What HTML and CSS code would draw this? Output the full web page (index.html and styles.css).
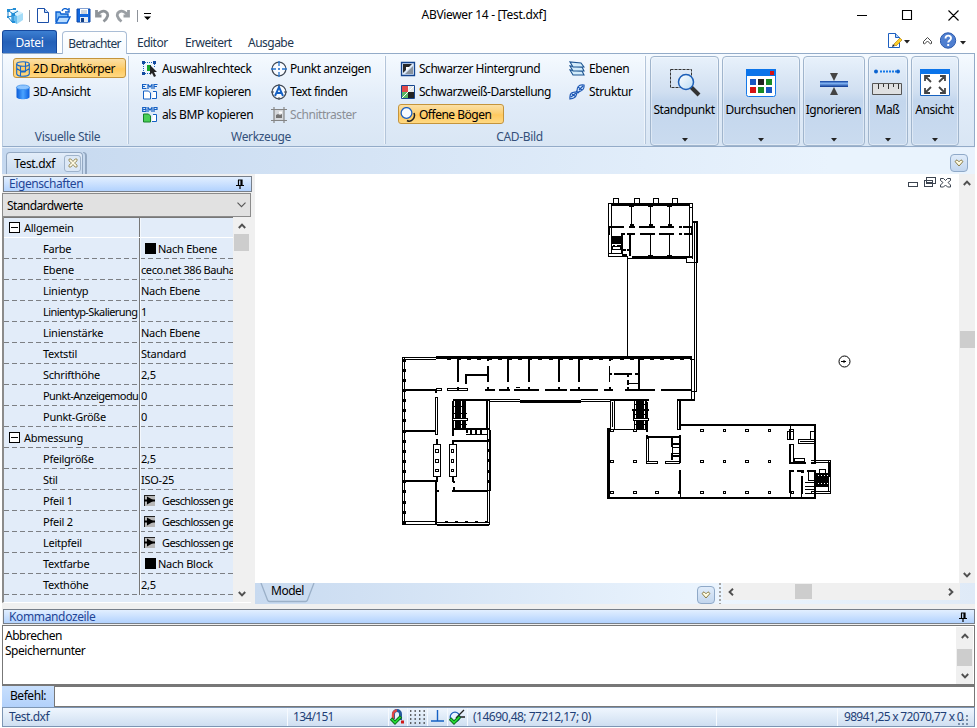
FILE: index.html
```html
<!DOCTYPE html>
<html lang="de">
<head>
<meta charset="utf-8">
<title>ABViewer 14 - [Test.dxf]</title>
<link rel="stylesheet" href="styles.css">
</head>
<body>
<svg class="defs" width="0" height="0">
  <defs>
    <linearGradient id="blue" x1="0" y1="0" x2="1" y2="0"><stop offset="0" stop-color="#0a5bd8"/><stop offset=".5" stop-color="#4aa3ff"/><stop offset="1" stop-color="#0b5fe0"/></linearGradient>
    <linearGradient id="lens" x1="0" y1="0" x2="1" y2="1"><stop offset="0" stop-color="#fff"/><stop offset="1" stop-color="#b9dcf5"/></linearGradient>
    <linearGradient id="bar" x1="0" y1="0" x2="0" y2="1"><stop offset="0" stop-color="#0c3c9c"/><stop offset=".4" stop-color="#7fb2f2"/><stop offset="1" stop-color="#0a3590"/></linearGradient>
    <symbol id="i-dd" viewBox="0 0 6 4"><path d="M0 0h6L3 3.5z" fill="#222"/></symbol>
    <symbol id="i-chev" viewBox="0 0 10 8"><path d="M1 2.5L3 .8 5 2.8 7 .8 9 2.5 5 7z" fill="#fffbe0" stroke="#8a7d4a"/></symbol>
    <symbol id="i-pin" viewBox="0 0 8 10"><path d="M2 1h4v5M2.500 1v5M5 1v5M0 6.500h8M4 7v3" fill="none" stroke="#000" stroke-width="1.200"/></symbol>
    <symbol id="i-up" viewBox="0 0 8 6"><path d="M.8 5L4 1.600 7.200 5" fill="none" stroke="#505050" stroke-width="1.900"/></symbol>
    <symbol id="i-down" viewBox="0 0 8 6"><path d="M.8 1L4 4.400 7.200 1" fill="none" stroke="#505050" stroke-width="1.900"/></symbol>
    <symbol id="i-arrow" viewBox="0 0 11 11"><path d="M0 0h11v11H0z" fill="#b8b8b8"/><path d="M0 .5h11M.5 0v11" stroke="#222"/><path d="M0 5.500h11" stroke="#000" stroke-width="2"/><path d="M3 1.500l7 4-7 4z"/></symbol>
  </defs>
</svg>

<header class="titlebar">
  <div class="quick">
    <svg class="q-logo" width="18" height="18" viewBox="0 0 18 18"><path d="M5 5l6-2 6 3-6 3z" fill="#d5f0fd"/><path d="M5 5l6 4v8l-6-3z" fill="#67bdf0"/><path d="M11 9l6-3v7l-6 4z" fill="#a4dcf8"/><path d="M3 3l5-1M2 4v6l4 5M3 4l4 3v8M7 7l5-3M2 10l4-1" fill="none" stroke="#1d7fc4"/><path d="M1 2h3v3H1zM7 1h3v2H7zM6 6h3v3H6zM1 9h2v2H1zM6 14h3v2H6z" fill="#238fd8"/></svg>
    <i class="q-sep"></i>
    <svg class="q-new" width="12" height="15" viewBox="0 0 12 15"><path d="M.5.5h7l4 4v10H.5z" fill="#fff" stroke="#1b4fa8"/><path d="M7.500.5v4h4" fill="#bcd7f7" stroke="#1b4fa8"/></svg>
    <svg class="q-open" width="16" height="16" viewBox="0 0 16 16"><path d="M1 14V4h4l1 2h7v3" fill="#7fbdf8" stroke="#0b5fd0" stroke-width="1.400"/><path d="M1 15l3-6h11l-3 6z" fill="#b9dcff" stroke="#0b5fd0" stroke-width="1.400"/><path d="M7 3c1-3 4-3 6-1M14 0v4h-4" fill="none" stroke="#0b5fd0" stroke-width="1.400"/></svg>
    <svg class="q-save" width="15" height="15" viewBox="0 0 15 15"><path d="M1 1h13v13H1z" fill="#1269e0" stroke="#0b46a8"/><path d="M4 1h8v5H4z" fill="#fff"/><path d="M5 3h6M5 5h6" stroke="#9ab"/><path d="M4 9h8v5H4z" fill="#e8eef5"/><path d="M5 10h3v4H5z" fill="#123f86"/></svg>
    <svg class="q-undo" width="15" height="14" viewBox="0 0 15 14"><path d="M1.500 1v6h5M2 6.500C4 3 8 1 11 3s2 6-2.500 9.500" fill="none" stroke="#8f9499" stroke-width="2.800"/></svg>
    <svg class="q-redo" width="15" height="14" viewBox="0 0 15 14"><path d="M13.500 1v6h-5M13 6.500C11 3 7 1 4 3s-2 6 2.500 9.500" fill="none" stroke="#9a9fa4" stroke-width="2.800"/></svg>
    <i class="q-sep"></i>
    <svg class="q-more" width="7" height="8" viewBox="0 0 7 8"><path d="M0 1h7v1H0zM0 4.500h7L3.500 8z" fill="#000"/></svg>
  </div>
  <h1>ABViewer 14 - [Test.dxf]</h1>
  <svg class="winbtns" width="104" height="12" viewBox="0 0 104 12"><path d="M0 6.500h10M45.500 1.500h9v9h-9zM91.500 1.500l10 10M101.500 1.500l-10 10" fill="none" stroke="#000" stroke-width="1.100"/></svg>
</header>

<nav class="tabs">
  <span class="tab file">Datei</span>
  <span class="tab active">Betrachter</span>
  <span class="tab t3">Editor</span>
  <span class="tab t4">Erweitert</span>
  <span class="tab t5">Ausgabe</span>
  <div class="help">
    <svg width="24" height="16" viewBox="0 0 24 16"><path d="M1.500.5h7l4 4v10h-11z" fill="#fff" stroke="#1d5fc0"/><path d="M8.500.5v4h4" fill="#a9cdf6" stroke="#1d5fc0"/><path d="M5 14l1-3 2 2z" fill="#222"/><path d="M7 11l6-6 2 2-6 6z" fill="#ffd02a" stroke="#b8860b" stroke-width=".7"/><path d="M17 7h6l-3 3.500z" fill="#222"/></svg>
    <svg class="h-up" width="9" height="8" viewBox="0 0 9 8"><path d="M.5 4.500l4-4 4 4v2l-1 .5-3-3-3 3-1-.5z" fill="#fff" stroke="#444"/></svg>
    <svg width="27" height="17" viewBox="0 0 27 17"><circle cx="8" cy="8.500" r="7.700" fill="#4f7fd0" stroke="#2d5bae"/><path d="M5.500 6.500c0-4 5.500-3.500 5.500-.3C11 8.500 8.200 8.300 8.200 10.500M8.200 12v2" fill="none" stroke="#fff" stroke-width="1.900"/><path d="M20 9h6l-3 3.500z" fill="#222"/></svg>
  </div>
</nav>

<section class="ribbon">
  <div class="group g1">
    <div class="cols"><div class="col">
      <span class="cmd on w113"><svg width="16" height="16" viewBox="0 0 16 16"><g fill="none" stroke="#1769c8" stroke-width="1.100"><ellipse cx="8" cy="3" rx="6.300" ry="2.300"/><path d="M1.700 3v10c1 3 11.600 3 12.600 0V3M5.500 5v10M10.500 1v10M1.700 7.500l4 2.500h4.800l4-2.500M5.500 15v-4h5"/></g></svg>2D Drahtkörper</span>
      <span class="cmd"><svg width="16" height="16" viewBox="0 0 16 16"><path d="M1.500 3v10c0 3 13 3 13 0V3z" fill="url(#blue)"/><ellipse cx="8" cy="3.300" rx="6.500" ry="2.300" fill="#8fc6ff" stroke="#3a8eea" stroke-width=".7"/></svg>3D-Ansicht</span>
    </div></div>
    <div class="label">Visuelle Stile</div>
  </div>
  <div class="group g2">
    <div class="cols"><div class="col c1">
      <span class="cmd"><svg width="16" height="16" viewBox="0 0 16 16"><path d="M3 1.500h9M1.500 3v9M12.500 3v4M3 12.500h5" stroke="#1c61bd" stroke-dasharray="1 1"/><path d="M0 0h3v3H0zM11 0h3v3h-3zM0 11h3v3H0z" fill="#124a9f"/><path d="M5 4h4v6H5z" fill="#16a32b"/><path d="M8 4v10l2-2 2 4 2-1-2-4h3z" fill="#222"/></svg>Auswahlrechteck</span>
      <span class="cmd"><svg width="16" height="16" viewBox="0 0 16 16"><path d="M4.500.5h-4v4h4M.5 2.500H3M6 5V.5L8 3l2-2.500V5M15.500.5H12V5M12 2.500h3" fill="none" stroke="#1460c4" stroke-width="1.200"/><path d="M1.500 7h5l2 2v6h-7z" fill="#fff" stroke="#1460c4"/><path d="M11 7.500h3.500v7H10" fill="#fff" stroke="#1460c4"/></svg>als EMF kopieren</span>
      <span class="cmd"><svg width="16" height="16" viewBox="0 0 16 16"><path d="M.7 5V.5H4L3.500 2.500H1h3L4 4.500H1M6 5V.5L8 3l2-2.500V5M12 5V.5h3v2h-3" fill="none" stroke="#1460c4" stroke-width="1.200"/><path d="M1.500 7h5l2 2v6h-7z" fill="#49cf55" stroke="#16812a"/><path d="M11 7.500h3.500v7H10" fill="#fff" stroke="#1460c4"/></svg>als BMP kopieren</span>
    </div><div class="col">
      <span class="cmd"><svg width="16" height="16" viewBox="0 0 16 16"><circle cx="8" cy="8" r="6.900" fill="#f8fbff" stroke="#444c58" stroke-width="1.300"/><path d="M8 0v5M8 11v5M0 8h5M11 8h5" stroke="#2674cf" stroke-width="1.300"/><circle cx="8" cy="8" r="1" fill="#1460c4"/></svg>Punkt anzeigen</span>
      <span class="cmd"><svg width="16" height="16" viewBox="0 0 16 16"><circle cx="8" cy="8" r="6.900" fill="#f8fbff" stroke="#444c58" stroke-width="1.300"/><path d="M8 0v3M8 13v3M0 8h3M13 8h3" stroke="#444c58"/><path d="M4 12L8 3l4 9M5.500 9h5" fill="none" stroke="#1460c4" stroke-width="1.900"/></svg>Text finden</span>
      <span class="cmd off"><svg width="16" height="16" viewBox="0 0 16 16"><path d="M3 3h10v10H3z" fill="#d5d8dc"/><path d="M3 0v16M13 0v16M0 2.500h16M0 13.500h16" fill="none" stroke="#858585" stroke-width="1.200"/><path d="M5 11V8l2-1 2 1 2-1v4z" fill="#737373"/><path d="M8 4.500h3v2H8z" fill="#fff"/></svg>Schnittraster</span>
    </div></div>
    <div class="label">Werkzeuge</div>
  </div>
  <div class="group g3">
    <div class="cols"><div class="col c1">
      <span class="cmd"><svg width="16" height="16" viewBox="0 0 16 16"><path d="M1.500 1.500h13v13h-13z" fill="#dbe9fa" stroke="#15458f" stroke-width="1.300"/><path d="M3 3h9L3 12z" fill="#282828"/><path d="M13 5v8H5z" fill="#89939e"/><path d="M6 6h4l-4 4z" fill="#fff"/></svg>Schwarzer Hintergrund</span>
      <span class="cmd"><svg width="16" height="16" viewBox="0 0 16 16"><path d="M1.500 1.500h13v13h-13z" fill="#fff" stroke="#15458f"/><path d="M2 2h6v6H2z" fill="#e04a4a"/><path d="M8 8h6v6H8z" fill="#222"/><path d="M9 2h5v6H8z" fill="#e4e7e9"/><path d="M2 8h6v6H2z" fill="#5bb865"/><path d="M2 14L14 2" stroke="#fff"/></svg>Schwarzweiß-Darstellung</span>
      <span class="cmd on w106"><svg width="16" height="16" viewBox="0 0 16 16"><circle cx="6.500" cy="6" r="5.400" fill="#f7fbff" stroke="#1b5fc0" stroke-width="1.300"/><path d="M14 6c2 5-3 10-7 7.500" fill="none" stroke="#222" stroke-width="1.500"/></svg>Offene Bögen</span>
    </div><div class="col">
      <span class="cmd"><svg width="16" height="16" viewBox="0 0 16 16"><g fill="#d3ecfb" stroke="#1b5390" stroke-width="1.100"><path d="M1 9l3 5h11l-2-4z"/><path d="M1 5l3 5h11l-2-4z"/><path d="M1 1l3 5h11l-3-4z"/></g></svg>Ebenen</span>
      <span class="cmd"><svg width="16" height="16" viewBox="0 0 16 16"><path d="M1 15C0 5 8 10 8 7S9 0 15 1c1 7-6 6-7 8s0 5-7 6zM3 10l4 3M2 13l5-4M9 3l4 3M10 6l4-4M7 7l3 2" fill="#dceeff" stroke="#1c56b3" stroke-width="1.200"/></svg>Struktur</span>
    </div></div>
    <div class="label">CAD-Bild</div>
  </div>
  <div class="bigs">
    <div class="big b1"><svg width="32" height="32" viewBox="0 0 32 32"><path d="M1.500 3.500h21v18h-21z" fill="none" stroke="#333" stroke-dasharray="3 1"/><path d="M21 20l9 9" stroke="#333" stroke-width="4"/><circle cx="17" cy="16" r="7.500" fill="url(#lens)" stroke="#1c5fb8" stroke-width="1.500"/></svg><span>Standpunkt</span><svg class="dd" width="6" height="4"><use href="#i-dd"/></svg></div>
    <div class="big b2"><svg width="32" height="32" viewBox="0 0 32 32"><rect x="1.500" y="3.500" width="29" height="27" rx="2" fill="#fff" stroke="#1478e8"/><path d="M1 3h30v7H1z" fill="#0b74ea"/><path d="M25 5h4v4h-4zM5 21h6v6H5z" fill="#d51212"/><path d="M5 13h6v6H5zM21 21h6v6h-6z" fill="#1757c2"/><path d="M13 13h6v6h-6z" fill="#222"/><path d="M21 13h6v6h-6zM13 21h6v6h-6z" fill="#168a24"/></svg><span>Durchsuchen</span><svg class="dd" width="6" height="4"><use href="#i-dd"/></svg></div>
    <div class="big b3"><svg width="32" height="32" viewBox="0 0 32 32"><path d="M12 7h8l-4 8zM16 21l4 8h-8z" fill="#444"/><path d="M2 15h28v6H2z" fill="url(#bar)"/></svg><span>Ignorieren</span><svg class="dd" width="6" height="4"><use href="#i-dd"/></svg></div>
    <div class="big b4"><svg width="32" height="32" viewBox="0 0 32 32"><path d="M8 5.500h16" stroke="#1478e8" stroke-width="2" stroke-dasharray="2 1"/><circle cx="4" cy="5.500" r="2" fill="#0b63d0"/><circle cx="26" cy="5.500" r="2" fill="#0b63d0"/><path d="M.5 17.500h29v11H.5z" fill="#dfe0e1" stroke="#555"/><path d="M6.500 18v5M11.500 18v3M16.500 18v5M21.500 18v3M26.500 18v5" stroke="#333"/></svg><span>Maß</span><svg class="dd" width="6" height="4"><use href="#i-dd"/></svg></div>
    <div class="big b5"><svg width="32" height="32" viewBox="0 0 32 32"><path d="M1.500 3.500h29v26h-29z" fill="#fff" stroke="#1661bf"/><path d="M1 3h30v5H1z" fill="#0b74ea"/><g fill="none" stroke="#444" stroke-width="1.800"><path d="M12 16l-5-5M6 15v-5h5M20 16l5-5M21 10h5v5M12 21l-5 5M6 22v5h5M20 21l5 5M21 27h5v-5"/></g></svg><span>Ansicht</span><svg class="dd" width="6" height="4"><use href="#i-dd"/></svg></div>
  </div>
</section>

<div class="docbar">
  <div class="doctab"><span>Test.dxf</span><i class="close"><svg width="10" height="10" viewBox="0 0 10 10"><path d="M1 1h2l2 2.500L7 1h2v2L6.500 5 9 7v2H7L5 6.500 3 9H1V7l2.500-2L1 3z" fill="#fffbe6" stroke="#8a7d4a" stroke-width=".8"/></svg></i></div><i class="tabend"></i>
  <i class="chevbtn"><svg width="10" height="8"><use href="#i-chev"/></svg></i>
</div>

<main class="work">
  <aside class="panel">
    <div class="cap"><span>Eigenschaften</span><svg width="8" height="10"><use href="#i-pin"/></svg></div>
    <div class="combo"><span>Standardwerte</span><svg width="9" height="6" viewBox="0 0 9 6"><path d="M.5.7l4 4 4-4" fill="none" stroke="#555" stroke-width="1.100"/></svg></div>
    <div class="gridwrap">
      <div class="props">
        <div class="row head first"><b><i class="minus"></i>Allgemein</b><span></span></div>
        <div class="row"><b>Farbe</b><span><i class="sw"></i>Nach Ebene</span></div>
        <div class="row"><b>Ebene</b><span class="tight">ceco.net 386 Bauha</span></div>
        <div class="row"><b>Linientyp</b><span>Nach Ebene</span></div>
        <div class="row"><b class="tight">Linientyp-Skalierung</b><span>1</span></div>
        <div class="row"><b>Linienstärke</b><span>Nach Ebene</span></div>
        <div class="row"><b>Textstil</b><span>Standard</span></div>
        <div class="row"><b>Schrifthöhe</b><span>2,5</span></div>
        <div class="row"><b class="tight">Punkt-Anzeigemodu</b><span>0</span></div>
        <div class="row"><b>Punkt-Größe</b><span>0</span></div>
        <div class="row head"><b><i class="minus"></i>Abmessung</b><span></span></div>
        <div class="row"><b>Pfeilgröße</b><span>2,5</span></div>
        <div class="row"><b>Stil</b><span>ISO-25</span></div>
        <div class="row"><b>Pfeil 1</b><span class="tighter"><svg class="arr" width="11" height="11"><use href="#i-arrow"/></svg>Geschlossen ge</span></div>
        <div class="row"><b>Pfeil 2</b><span class="tighter"><svg class="arr" width="11" height="11"><use href="#i-arrow"/></svg>Geschlossen ge</span></div>
        <div class="row"><b>Leitpfeil</b><span class="tighter"><svg class="arr" width="11" height="11"><use href="#i-arrow"/></svg>Geschlossen ge</span></div>
        <div class="row"><b>Textfarbe</b><span><i class="sw"></i>Nach Block</span></div>
        <div class="row"><b>Texthöhe</b><span>2,5</span></div>
      </div>
      <div class="vscroll"><svg width="8" height="6"><use href="#i-up"/></svg><i class="thumb"></i><svg class="end" width="8" height="6"><use href="#i-down"/></svg></div>
    </div>
  </aside>

  <section class="view">
    <div class="viewtop">
      <svg class="canvas" width="704" height="409" viewBox="255 174 704 409" shape-rendering="crispEdges" fill="none" stroke="#000">
        <g stroke="#3c4450" fill="#fff"><path d="M908.500 182.500h9v4h-9zM926.500 177.500h9v6h-9zM924.500 180.500h8v6h-8z"/><path d="M926 182.500h6"/><path shape-rendering="auto" d="M940.500 178.500h3l2 2 2-2h3v2l-2.500 2 2.500 2.500v2h-3l-2-2-2 2h-3v-2l2.500-2.500-2.500-2z"/></g>
        <!-- north block -->
        <path d="M613.500 203v-4.500h5v4.500M634.500 203v-4.500h5v4.500M653.500 203v-4.500h5v4.500M672.500 203v-4.500h5v4.500M608.500 203.500h84v55M608.500 203v53.500h19.500M611.500 204v49M608.500 253.500h14M689.500 204v54M692.500 207.500h-3M631.500 205v21M650.500 205v21M669.500 205v21M650.500 235v21M669.500 235v21M612.500 246.500h8v3h-8zM627.500 257v100M628 258.500h8M686.500 259v3.500h11M694.500 223v177M696.500 221v171M691 391.500h6M691.500 357v43"/>
        <path stroke-width="2" d="M612 205h77M609 227h15M629 227h6M639 227h16M660 227h14M679 227h3M683 227h10M621 234h4M627 234h8M640 234h15M659 234h15M679 234h3M684 234h9M609 227v8M622 234v20M630 234v22M623 250h3M627 250h3M622 255h5M632 257h60M629 206h5M648 206h5M667 206h5M629.500 225h4M648.500 225h4M667.500 225h4M648 256h5M667 256h5M693 222h5M697 221v41M692 227v8"/>
        <path stroke-width="3" d="M612 204.500h75M632 257.500h55"/>
        <path fill="#000" stroke="none" d="M612 236h10v8h-10zM613 245h2v1h-2zM617 245h4v1h-4z"/>
        <!-- connecting wing -->
        <path stroke-width="3" d="M436 357.500h256M520 401.500h61"/>
        <path stroke-dasharray="4 6.150" d="M447 359.500h242"/>
        <path stroke-width="2" d="M485 390h10M499 390h11M514 390h25M545 390h22M570 390h28M604 390h9M625 390h30M661 390h31M458 358v24M458 387v3M488 359v2M488 366v16M488 387v3M508 358v24M508 387v3M529 358v24M529 387v3M559 358v24M559 387v3M579 358v24M579 387v3M639 358v32M466 374v10M466 375h22M614 374h18M635 374h4M628 375v2M628 380v5M628 387v3M610 374h2M610 358v3M610 387v3M453 400h37M610 400h39M677 400h18"/>
        <path d="M436.500 388.500h5v2h-5zM447.500 388.500h20v2h-20zM515.500 387.500h4M609.500 366v16M628 383.500h11M490 399.500h30M490 401.500h30M581 399.500h29M581 401.500h29M402.500 357.500h34M405 359.500h31M677 400.500h18M690 359.500h4"/>
        <!-- west wing -->
        <path d="M402.500 357v167.500h34M404.500 358v164M404 521.500h32M435.500 397.500h2v37h-2zM433.500 444.500h7v32h-7zM449.500 444.500h7v32h-7zM435.500 449.500h3v3h-3zM435.500 459.500h3v3h-3zM435.500 469.500h3v2h-3zM451.500 449.500h2v3h-2zM451.500 459.500h2v3h-2zM451.500 469.500h2v2h-2zM486.500 401v28M489.500 401v123.500M487.500 401v121M437 522.500h52M466 434.500h21"/>
        <path stroke-width="2" d="M404 390h33M404 431h32M404 481h33M452 491h36M436 482v43M437 525h52M437 439v5M437 477v5M436 480v3M436 487v5M436 491h3M453 421v15M453 440v4M453 477v5M454 481v2M454 487v5M453 441h35M453 429h37M490 430v61M453 401v28M471 430v5M476 430v5M481 430v5M467 430v3M436 390v3"/>
        <path stroke-width="3" stroke-dasharray="3 7.150" d="M404.500 358.500v165"/>
        <path stroke-width="3" stroke-dasharray="3 7.200" d="M488.500 439v52"/>
        <path stroke-width="2" stroke-dasharray="3 7" d="M445 522h43"/>
        <path fill="#000" stroke="none" d="M455 401h6v28h-6zM462 401h4v28h-4z"/>
        <path d="M452 406.500h14M452 413.500h15M455 424.500h12"/>
        <path fill="#fff" d="M452.500 418.500h15v2h-15z"/>
        <!-- east hall -->
        <path d="M610.500 401v28M612.500 402v25M614.500 401v28M610 429.500h37M634.500 401v28M677.500 399v30.500h3M633.500 409v10M646.500 437v25M648.500 438v23M646.500 461.500h11v2h-11zM665.500 461.500h14v2h-14zM672 447.500h8M672.500 447v6M672 453.500h8M679.500 447v15M680.500 493v5M620 429.500h14M815.500 425v36"/>
        <path stroke-width="3" d="M608.500 428v71"/>
        <path stroke-width="2" d="M607 498h209M680 425h136M815 424v38M815 470v29M680 401v28M647 402v30M647 435v4M647 437h33M672 438v9M680 435v28M680 470v23M672 444h8M672 456h8M672 453v7M790 444v18M790 470v23M789 463h17M811 463h5M789 471h5M797 471h7M807 471h8M802 476v18M790 431v8M801 472h3"/>
        <path fill="#000" stroke="none" d="M636 401h8v28h-8zM645 401h2v28h-2zM632 409h17v2h-17z"/>
        <path d="M634 404.500h13M634 414.500h14M634 424.500h13"/>
        <path fill="#fff" d="M633.500 418.500h15v2h-15z"/>
        <path d="M610.500 429.500h3v2h-3zM633.500 429.500h3v2h-3zM700.500 429.500h3v2h-3zM723.500 429.500h2v2h-2zM745.500 429.500h3v2h-3zM768.500 429.500h2v2h-2zM610.500 460.500h3v2h-3zM633.500 460.500h3v2h-3zM700.500 460.500h3v2h-3zM723.500 460.500h2v2h-2zM745.500 460.500h3v2h-3zM768.500 460.500h2v2h-2zM610.500 491.500h3v2h-3zM633.500 491.500h3v2h-3zM655.500 491.500h3v2h-3zM678.500 491.500h2v2h-2zM700.500 491.500h3v2h-3zM723.500 491.500h2v2h-2zM745.500 491.500h3v2h-3zM768.500 491.500h2v2h-2z"/>
        <path d="M790.500 426v5M787.500 431.500h6v8h-6zM789.500 429.500h4v2h-4zM790 444.500h3.500v17M794.500 458.500h10v3h-10zM790.500 493v5M791.500 491.500h2v2h-2zM801.500 493v5M808.500 471.500h6v9h-6zM805 482.500h10M805 486.500h10M805 489.500h10M805 493.500h10M810.500 431.500h4v8h-4zM798.500 439.500h16v4h-16zM800 441.500h15M811 460.500h19.500v33H811.500v-2h18M811 462.500h18M828.500 461v31M819.500 473v-3.500h6v3.500"/>
        <path stroke-width="2" d="M829 462v15"/>
        <path fill="#000" stroke="none" d="M816 473h12v2h-12zM815 476h13v7h-13zM816 484h12v3h-12z"/>
        <path stroke-dasharray="2 1" d="M816 475.500h12M816 483.500h12"/>
        <g shape-rendering="auto"><circle cx="844.500" cy="361.500" r="5.500"/><path d="M841 361.500h5M844 360v3"/></g>
      </svg>
      <div class="vscroll big-v"><svg width="8" height="6"><use href="#i-up"/></svg><i class="thumb"></i><svg class="end" width="8" height="6"><use href="#i-down"/></svg></div>
    </div>
    <div class="modelbar">
      <svg class="modeltab" width="56" height="20" viewBox="0 0 56 20"><path d="M1 0l6.500 17c.4 1 1 1.500 2 1.500h36c1 0 1.600-.5 2-1.500L54 0" fill="#cbdcf0" stroke="#9bb0c8" stroke-width="1.300"/></svg>
      <span class="modeltext">Model</span>
      <i class="chevbtn"><svg width="10" height="8"><use href="#i-chev"/></svg></i>
      <i class="grip"></i>
      <div class="hscroll"><svg width="6" height="8" viewBox="0 0 6 8"><path d="M5 .8L1.600 4 5 7.200" fill="none" stroke="#505050" stroke-width="1.900"/></svg><i class="thumb"></i><svg class="end" width="6" height="8" viewBox="0 0 6 8"><path d="M1 .8L4.400 4 1 7.200" fill="none" stroke="#505050" stroke-width="1.900"/></svg></div>
    </div>
  </section>
</main>

<section class="cmdline">
  <div class="cap"><span>Kommandozeile</span><svg width="8" height="10"><use href="#i-pin"/></svg></div>
  <div class="log"><div class="lines"><p>Abbrechen</p><p>Speichernunter</p></div>
    <div class="vscroll"><svg width="8" height="6"><use href="#i-up"/></svg><i class="thumb"></i><svg class="end" width="8" height="6"><use href="#i-down"/></svg></div>
  </div>
  <div class="prompt"><label>Befehl:</label><div class="input"></div></div>
</section>

<footer class="status">
  <span class="s1">Test.dxf</span>
  <span class="s2">134/151</span>
  <span class="s3"><svg width="16" height="16" viewBox="0 0 16 16"><path d="M3.500 10V5a3.500 3.500 0 017 0v6" fill="none" stroke="#24599c" stroke-width="3"/><path d="M3 10V6a4 4 0 014-4.500" fill="none" stroke="#e04545" stroke-width="2.400"/><path d="M5 9V6a2 2 0 014 0v3z" fill="#e8f0fa"/><path d="M1 9.500l4 4 6-6" fill="none" stroke="#0b6a1a" stroke-width="3.400"/><path d="M1.500 10l3.500 3.500 5.500-5.500" fill="none" stroke="#25df35" stroke-width="1.600"/><path d="M11 11.500h3v3h-3z" fill="#d01818"/></svg></span>
  <span class="s4"><svg width="15" height="14" viewBox="0 0 15 14"><path d="M0 1h15M0 5h15M0 9h15M0 13h15" stroke="#333" stroke-width="1.400" stroke-dasharray="1.400 3.100"/></svg></span>
  <span class="s5"><svg width="13" height="12" viewBox="0 0 13 12"><path d="M6.500 0v11M0 11h13" stroke="#1460c4" stroke-width="1.400"/></svg></span>
  <span class="s6"><svg width="16" height="16" viewBox="0 0 16 16"><circle cx="6" cy="8" r="4.800" fill="#e7f2ff" stroke="#1c5fb8" stroke-width="1.300"/><path d="M7 9l8-8M8 8h8" stroke="#222" stroke-width="1.300"/><path d="M1 9.500l4 4 6-6" fill="none" stroke="#0b6a1a" stroke-width="3.400"/><path d="M1.500 10l3.500 3.500 5.500-5.500" fill="none" stroke="#25df35" stroke-width="1.600"/></svg></span>
  <span class="s7">(14690,48; 77212,17; 0)</span>
  <span class="s8"></span>
  <span class="s9">98941,25 x 72070,77 x 0</span>
  <svg class="sizer" width="11" height="11" viewBox="0 0 11 11"><path d="M8 0h2v2H8zM4 4h2v2H4zM8 4h2v2H8zM0 8h2v2H0zM4 8h2v2H4zM8 8h2v2H8z" fill="#7b90aa"/></svg>
</footer>
</body>
</html>
```
FILE: styles.css
```css
* { box-sizing: border-box; }
html, body { margin: 0; padding: 0; }
body {
  width: 977px; height: 728px; overflow: hidden; background: #fff;
  display: flex; flex-direction: column; padding: 0 2px;
  font: 12px/15px "Noto Sans", "Open Sans", sans-serif; letter-spacing: -0.35px; color: #000;
}
svg { display: block; flex: none; }
i { font-style: normal; display: block; flex: none; }
.defs { position: absolute; }

.titlebar { height: 30px; flex: none; display: grid; grid-template-columns: 300px 1fr 300px; align-items: center; }
.titlebar h1 { margin: 0; font-size: 12px; font-weight: 400; text-align: center; padding: 0 9px 2px 0; letter-spacing: -0.32px; }
.quick { display: flex; align-items: center; padding: 1px 0 0 4px; }
.q-sep { width: 1px; height: 12px; background: #8d9299; }
.q-logo { margin-right: 5px; }
.q-new { margin-left: 7px; }
.q-open { margin-left: 6px; }
.q-save { margin-left: 5px; }
.q-undo { margin-left: 4px; }
.q-redo { margin-left: 5px; }
.q-redo + .q-sep { margin-left: 7px; }
.q-more { margin-left: 6px; }
.winbtns { justify-self: end; margin-right: 14px; }

.tabs { height: 23px; flex: none; display: flex; align-items: flex-end; color: #22364f; }
.tab { height: 22px; line-height: 24px; white-space: nowrap; }
.tab.file { width: 55px; height: 23px; line-height: 23px; text-align: center; color: #fff; border: 1px solid #16489c; border-bottom: 0; border-radius: 3px 3px 0 0; background: linear-gradient(#3c7fd2, #2460b8 50%, #2e6cc4); letter-spacing: -.3px; }
.tab.active { width: 65px; height: 23px; line-height: 23px; margin: 0 0 -1px 5px; text-align: center; border: 1px solid #a9bdd6; border-bottom: 0; border-radius: 4px 4px 0 0; background: linear-gradient(#fff, #f4f9ff); z-index: 1; letter-spacing: -0.72px; }
.t3, .t4, .t5 { letter-spacing: -.52px; }
.t3 { margin-left: 10px; width: 30px; }
.t4 { margin-left: 18px; width: 45px; }
.t5 { margin-left: 18px; }
.help { margin-left: auto; display: flex; align-items: center; padding: 0 8px 4px 0; }
.h-up { margin: 0 8px 0 12px; }

.ribbon { height: 94px; flex: none; display: flex; border: 1px solid #93abc8; border-left-color: #b9cbe0; background: linear-gradient(#f5faff, #e0ebf8 55%, #d9e6f4); }
.group { display: flex; flex-direction: column; border-right: 1px solid #b3c5da; box-shadow: inset -1px 0 #fff8; margin: 2px 0; }
.g1 { width: 126px; }
.g2 { width: 257px; }
.g3 { width: 260px; }
.cols { display: flex; padding-top: 2px; height: 74px; }
.col { display: flex; flex-direction: column; gap: 3px; }
.cmd { display: flex; align-items: center; gap: 4px; height: 20px; padding: 1px 3px 0 2px; border: 1px solid transparent; border-radius: 3px; white-space: nowrap; }
.cmd.on { border-color: #c4943c; background: linear-gradient(#fbe0a6, #fccf74 45%, #ffc95f 55%, #ffd983); }
.cmd.w113 { width: 113px; letter-spacing: -.45px; gap: 3px; padding-left: 1px; }
.w106 { width: 106px; letter-spacing: -.5px; }
.g1 .cmd { gap: 2px; padding-left: 1px; }
.off { color: #8b8f96; }
.g1 .cols { padding-left: 10px; }
.g2 .cols { padding-left: 10px; }
.g2 .c1 { width: 128px; letter-spacing: -.4px; }
.g2 .col + .col { letter-spacing: -.45px; }
.g2 .col + .col .cmd { padding-left: 3px; gap: 3px; }
.g3 .cols { padding-left: 11px; }
.g3 .c1 { width: 169px; letter-spacing: -.48px; }
.g3 .c1 .cmd { padding-left: 2px; gap: 3px; }
.g3 .w106 { margin-left: 1px; }
.g3 .c1 .w106 { padding-left: 1px; }
.label { text-align: center; color: #33507a; line-height: 15px; margin-top: 2px; }
.g2 .label, .g3 .label { padding-left: 8px; }
.g1 .label { padding-left: 4px; }

.bigs { display: flex; padding: 2px 0 0 4px; }
.big { display: flex; flex-direction: column; align-items: center; height: 90px; border: 1px solid #a0b5cd; border-radius: 4px; box-shadow: inset 0 0 0 1px #fff6; background: linear-gradient(#e8f1fb, #d0dff1 40%, #c3d6ed 50%, #cadbef); padding-top: 9px; margin-left: 3px; letter-spacing: -.42px; }
.big span { line-height: 15px; margin: 4px 1px 0 0; white-space: nowrap; }
.big .dd { margin-top: 21px; }
.b1 { width: 69px; margin-left: 0; }
.b2 { width: 78px; }
.b3 { width: 62px; }
.b4 { width: 40px; }
.b5 { width: 48px; }

.docbar { height: 27px; flex: none; display: flex; align-items: flex-end; background: linear-gradient(90deg, #c5d8ef, #e9f3fd 85%); border-top: 1px solid #e6effa; }
.doctab { margin-left: 4px; width: 77px; height: 22px; display: flex; align-items: center; padding-left: 7px; border: 1px solid #93a8c2; border-bottom: 0; border-radius: 4px 4px 0 0; background: linear-gradient(#e3edf9, #c9dbf0); }
.doctab span { width: 50px; }
.close { width: 17px; height: 17px; margin-top: -1px; display: grid; place-items: center; border: 1px solid #9fb3cb; border-radius: 3px; background: #dce8f6; }
.tabend { width: 4px; height: 22px; border-right: 2px solid #93a8c2; border-top: 1px solid #93a8c2; border-radius: 0 4px 0 0; }
.chevbtn { width: 18px; height: 18px; display: grid; place-items: center; border: 1px solid #8fa9c8; border-radius: 4px; background: linear-gradient(#e0ecfa, #c2d6ee); }
.docbar .chevbtn { margin: 0 7px 2px auto; }

.work { display: flex; height: 430px; flex: none; }
.panel { width: 253px; background: #f0f0f0; padding-top: 2px; }
.cap { height: 16px; display: flex; justify-content: space-between; align-items: center; border: 1px solid #777f8a; background: linear-gradient(#e2efff, #b2d2fe); color: #1f4596; padding: 0 7px 0 5px; line-height: 14px; letter-spacing: -.42px; }
.panel .cap { width: 249px; margin-left: 1px; }
.cmdline .cap { letter-spacing: -.36px; }
.combo { width: 249px; height: 24px; margin-top: 1px; border: 1px solid #8b8b8b; background: #e1e1e1; display: flex; justify-content: space-between; align-items: center; padding: 0 4px; letter-spacing: -.6px; }
.gridwrap { display: flex; width: 249px; height: 386px; border-left: 2px solid #8b8b8b; border-bottom: 1px solid #fff; }
.props { width: 229px; background: #e2ecf9; overflow: hidden; font-size: 11px; letter-spacing: -.25px; }
.row { display: flex; height: 21px; background: repeating-linear-gradient(90deg, #7c7f84 0 5px, transparent 5px 8px) bottom / 100% 1px no-repeat; }
.row.first { border-top: 1px solid #777; background: linear-gradient(#fff, #fff) bottom / 100% 1px no-repeat; }
.row.first b { line-height: 19px; height: 19px; }
.row b { width: 136px; flex: none; padding-left: 39px; font-weight: 400; line-height: 21px; white-space: nowrap; overflow: hidden; border-right: 1px solid #777; }
.row.head b { padding-left: 5px; display: flex; align-items: center; }
.row span { flex: 1; min-width: 0; display: flex; align-items: center; white-space: nowrap; overflow: hidden; border-left: 1px solid #f4f8fd; line-height: 21px; }
.row b.tight { letter-spacing: -.58px; }
.row span.tight { letter-spacing: -.42px; }
.row span.tighter { letter-spacing: -.6px; }
.minus { width: 11px; height: 11px; border: 1px solid #000; margin-right: 4px; background: linear-gradient(#000, #000) center / 7px 1px no-repeat #fff; }
.sw { width: 11px; height: 11px; background: #000; margin: 0 2px 0 4px; }
.arr { margin: 0 7px 0 3px; }
.vscroll { width: 17px; background: #f0f0f0; display: flex; flex-direction: column; align-items: center; padding: 6px 0 5px; }
.vscroll .thumb { width: 15px; height: 17px; background: #cdcdcd; }
.end { margin-top: auto; }
.hscroll .end { margin: 0 0 0 auto; }
.gridwrap .thumb { margin-top: 5px; }

.view { width: 720px; display: flex; flex-direction: column; }
.viewtop { display: flex; height: 409px; }
.canvas { background: #fff; }
.big-v { width: 16px; }
.big-v .thumb { margin-top: 145px; }
.modelbar { height: 21px; display: flex; background: linear-gradient(90deg, #c8daf0, #ecf5fe 65%, #dfeaf7); }
.modeltab { margin-left: 5px; }
.modeltext { margin-left: -45px; line-height: 16px; letter-spacing: -.5px; }
.modelbar .chevbtn { margin: 3px 0 0 auto; }
.grip { width: 2px; height: 21px; margin: 0 2px 0 4px; background: repeating-linear-gradient(#a5a5a5 0 2px, transparent 2px 4px); }
.hscroll { width: 237px; height: 17px; background: #f0f0f0; display: flex; align-items: center; padding: 0 6px 0 5px; margin-right: 15px; }
.hscroll .thumb { width: 17px; height: 15px; background: #cdcdcd; margin-left: 61px; }

.cmdline { background: #f0f0f0; padding-top: 5px; flex: none; height: 103px; }
.cmdline .cap { margin: 0 0 0 1px; height: 15px; }
.log { height: 60px; margin-top: 1px; border: 1px solid #777; background: #fff; display: flex; justify-content: space-between; }
.lines { padding: 2px 0 0 2px; }
.log p { margin: 0; letter-spacing: -.48px; line-height: 15px; }
.log .vscroll { margin: 1px 1px 0 0; }
.log .thumb { margin-top: 10px; }
.prompt { height: 22px; display: flex; border-top: 1px solid #777; }
.prompt label { width: 52px; background: linear-gradient(#c8dffc, #b2d1fb); padding-left: 8px; line-height: 20px; letter-spacing: -.45px; }
.input { flex: 1; border: 1px solid #777; background: #fff; }

.status { height: 20px; flex: none; display: flex; align-items: stretch; border: 1px solid #7d95b3; background: linear-gradient(#eff6fe, #cfdff1); color: #1f3f77; line-height: 17px; }
.status span { border-right: 1px solid #f6faff; white-space: nowrap; }
.s1 { width: 285px; padding-left: 6px; letter-spacing: -.45px; }
.s2 { width: 101px; padding-left: 5px; letter-spacing: -.7px; }
.s3 { width: 19px; padding: 1px 0 0 1px; }
.s4 { width: 20px; padding: 2px 0 0 2px; }
.s5 { width: 20px; padding: 2px 0 0 3px; }
.s6 { width: 20px; padding: 1px 0 0 1px; }
.s7 { width: 249px; padding-left: 5px; letter-spacing: -.5px; }
.s8 { width: 121px; }
.status .s9 { padding-left: 6px; border: 0; width: 123px; letter-spacing: -.68px; }
.sizer { align-self: flex-end; margin-left: -3px; }
```
